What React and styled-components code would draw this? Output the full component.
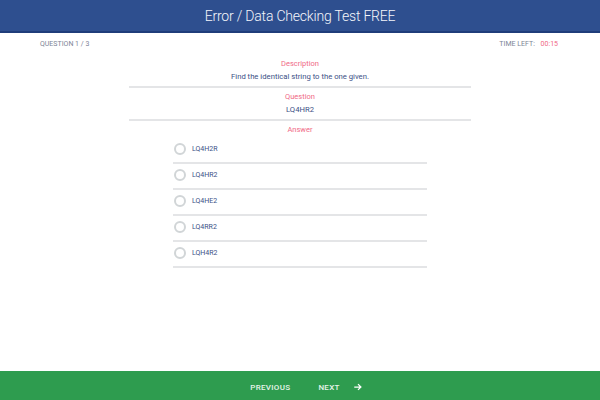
import React, { useState } from 'react';
import styled, { createGlobalStyle } from 'styled-components';

const GlobalStyle = createGlobalStyle`
  html, body {
    margin: 0;
    padding: 0;
    background: #fff;
  }
  body {
    font-family: Roboto, "Noto Sans", sans-serif;
  }
  #root {
    height: 400px;
  }
`;

const answers = ['LQ4H2R', 'LQ4HR2', 'LQ4HE2', 'LQ4RR2', 'LQH4R2'];

function App() {
  const [selected, setSelected] = useState(null);

  return (
    <Page>
      <GlobalStyle />
      <Header>
        <Title>Error / Data Checking Test FREE</Title>
      </Header>
      <StatusBar>
        <Counter>QUESTION 1 / 3</Counter>
        <Counter>
          TIME LEFT: <Time>00:15</Time>
        </Counter>
      </StatusBar>
      <Main>
        <Section>
          <Label>Description</Label>
          <Body>Find the identical string to the one given.</Body>
        </Section>
        <Section>
          <Label>Question</Label>
          <Body>LQ4HR2</Body>
        </Section>
        <Section $plain>
          <Label>Answer</Label>
        </Section>
        <Options>
          {answers.map((a, i) => (
            <Option key={a} onClick={() => setSelected(i)}>
              <Radio $checked={selected === i} />
              <OptionText>{a}</OptionText>
            </Option>
          ))}
        </Options>
      </Main>
      <Footer>
        <NavButton>PREVIOUS</NavButton>
        <NavButton>
          NEXT
          <Arrow viewBox="0 0 12 12">
            <path d="M1.5 6h8M6 2.5L9.5 6 6 9.5" />
          </Arrow>
        </NavButton>
      </Footer>
    </Page>
  );
}

const Page = styled.div`
  height: 400px;
  display: flex;
  flex-direction: column;
`;

const Header = styled.header`
  height: 31px;
  background: #2e4f8f;
  border-bottom: 2px solid #1f3d7a;
  display: flex;
  align-items: center;
  justify-content: center;
`;

const Title = styled.h1`
  margin: 0;
  color: #f4f6fb;
  font-size: 14px;
  font-weight: 300;
  letter-spacing: -0.2px;
`;

const StatusBar = styled.div`
  display: flex;
  justify-content: space-between;
  padding: 7px 42px 0 40px;
  height: 14px;
`;

const Counter = styled.span`
  font-size: 7px;
  color: #7d8496;
`;

const Time = styled.span`
  color: #f06a86;
  margin-left: 4px;
`;

const Main = styled.main`
  flex: 1;
  display: flex;
  flex-direction: column;
  align-items: center;
  padding-top: 5px;
`;

const Section = styled.div`
  width: 342px;
  display: flex;
  flex-direction: column;
  align-items: center;
  gap: 4px;
  padding-bottom: ${p => (p.$plain ? '0' : '5px')};
  margin-bottom: ${p => (p.$plain ? '4px' : '4px')};
  border-bottom: ${p => (p.$plain ? 'none' : '2px solid #e4e5e7')};
`;

const Label = styled.div`
  color: #f06a86;
  font-size: 7.5px;
  line-height: 9px;
`;

const Body = styled.div`
  color: #3b4f86;
  font-size: 7.7px;
  line-height: 9px;
`;

const Options = styled.ul`
  list-style: none;
  margin: 0;
  padding: 0;
  width: 254px;
`;

const Option = styled.li`
  display: flex;
  align-items: center;
  gap: 6px;
  height: 21px;
  padding-bottom: 3px;
  border-bottom: 2px solid #e4e5e7;
  cursor: pointer;
`;

const Radio = styled.span`
  width: 8px;
  height: 8px;
  margin-left: 1px;
  border-radius: 50%;
  border: 2.5px solid #d1d5d7;
  background: ${p => (p.$checked ? '#3b4f86' : '#fff')};
`;

const OptionText = styled.span`
  color: #3b4f86;
  font-size: 7px;
`;

const Footer = styled.footer`
  height: 26px;
  padding-top: 3px;
  background: #2e9c4f;
  display: flex;
  align-items: center;
  justify-content: center;
  gap: 28px;
  padding-left: 13px;
`;

const NavButton = styled.button`
  background: none;
  border: none;
  padding: 0;
  color: #e6f4ea;
  font-family: Roboto, "Noto Sans", sans-serif;
  font-size: 8px;
  font-weight: 500;
  letter-spacing: 0.3px;
  display: flex;
  align-items: center;
  gap: 13px;
  cursor: pointer;
`;

const Arrow = styled.svg`
  width: 10px;
  height: 10px;
  fill: none;
  stroke: #fff;
  stroke-width: 1.5px;
`;

export default App;
